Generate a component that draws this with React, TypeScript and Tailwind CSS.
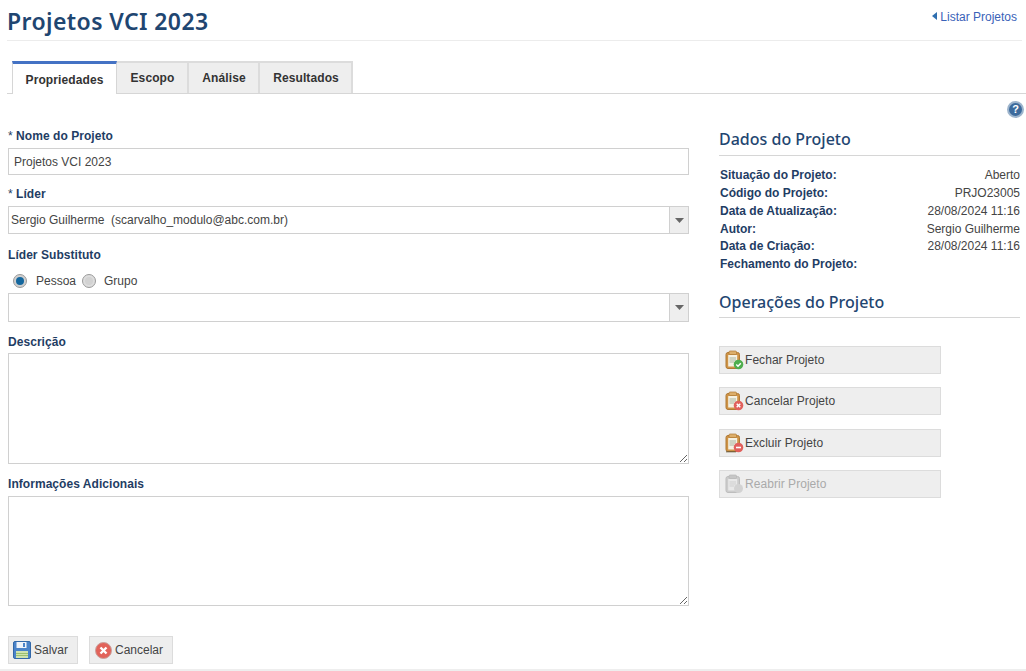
const label = "block text-[12px] leading-[14px] font-bold tracking-[0.05px] text-[#1f3d64]";
const field = "block w-full border border-[#d0d0d0] bg-white";
const heading = "border-b border-[#d6d6d6] font-['Noto_Sans',sans-serif] text-[16px] leading-[24px] font-medium text-[#1f4671]";

function Clipboard({ badge }: { badge?: "ok" | "x" | "minus" }) {
  const gray = !badge;
  return (
    <svg width="19" height="20" viewBox="0 0 19 20" className="shrink-0">
      <rect x="1" y="2.5" width="13.5" height="16" rx="2" fill={gray ? "#cccccc" : "#cf9447"} stroke={gray ? "#bdbdbd" : "#b07a35"} />
      <rect x="3.2" y="5" width="9" height="11.5" fill={gray ? "#e8e8e8" : "#f5f1e2"} />
      <path d="M4.5 8h6.5M4.5 10h6.5M4.5 12h4.5" stroke={gray ? "#cfcfcf" : "#a8b5a2"} strokeWidth="1" />
      <rect x="4" y="1" width="7.5" height="3.5" rx="1" fill={gray ? "#c6c6c6" : "#dcae6a"} stroke={gray ? "#b8b8b8" : "#b07a35"} strokeWidth="0.7" />
      {badge === "ok" && (
        <>
          <circle cx="13.5" cy="14.5" r="4.8" fill="#4fae4e" />
          <path d="M11.3 14.5l1.7 1.7 2.8-3" stroke="#fff" strokeWidth="1.4" fill="none" />
        </>
      )}
      {badge === "x" && (
        <>
          <circle cx="13.5" cy="14.5" r="4.8" fill="#e0605c" />
          <path d="M11.7 12.7l3.6 3.6M15.3 12.7l-3.6 3.6" stroke="#fff" strokeWidth="1.4" />
        </>
      )}
      {badge === "minus" && (
        <>
          <path d="M1 18.8h10" stroke="#6b5a3a" strokeWidth="1" />
          <circle cx="13.5" cy="14.5" r="4.8" fill="#e0605c" />
          <path d="M11 14.5h5" stroke="#fff" strokeWidth="1.6" />
        </>
      )}
      {gray && <circle cx="13.5" cy="14.5" r="4.5" fill="#d2d2d2" />}
    </svg>
  );
}

function Select({ value, className }: { value?: string; className: string }) {
  return (
    <div className={`flex border border-[#d0d0d0] bg-white ${className}`}>
      <div className="flex-1 pl-[2px] text-[12px] leading-[26px] whitespace-pre text-[#444]">{value}</div>
      <div className="flex w-[19px] items-center justify-center border-l border-[#d0d0d0] bg-[#eeeeee]">
        <svg width="9" height="5" viewBox="0 0 9 5"><path d="M0 0h9L4.5 5z" fill="#666" /></svg>
      </div>
    </div>
  );
}

function Radio({ on }: { on?: boolean }) {
  return (
    <span className={`flex h-[14px] w-[14px] items-center justify-center rounded-full border border-[#9a9a9a] ${on ? "bg-[#cfcfcf]" : "bg-[#dddddd]"}`}>
      <span className={`h-[8px] w-[8px] rounded-full ${on ? "bg-[#14679e]" : "bg-[#d2d2d2]"}`} />
    </span>
  );
}

const dados = [
  ["Situação do Projeto:", "Aberto"],
  ["Código do Projeto:", "PRJO23005"],
  ["Data de Atualização:", "28/08/2024 11:16"],
  ["Autor:", "Sergio Guilherme"],
  ["Data de Criação:", "28/08/2024 11:16"],
  ["Fechamento do Projeto:", ""],
];

const ops: { text: string; badge?: "ok" | "x" | "minus" }[] = [
  { text: "Fechar Projeto", badge: "ok" },
  { text: "Cancelar Projeto", badge: "x" },
  { text: "Excluir Projeto", badge: "minus" },
  { text: "Reabrir Projeto" },
];

const tabs = [
  { text: "Escopo", w: "w-[72px]" },
  { text: "Análise", w: "w-[71px]" },
  { text: "Resultados", w: "w-[93px]" },
];

export default function App() {
  return (
    <div className="h-[671px] w-[1026px] overflow-hidden bg-white font-['Liberation_Sans',Arial,sans-serif] text-[12px] text-[#444]">
      <div className="ml-[7px] mr-[4px] flex h-[41px] justify-between border-b border-[#ececec]">
        <h1 className="font-['Noto_Sans',sans-serif] text-[23px] leading-[43px] font-semibold tracking-[0.4px] text-[#1f4671]">Projetos VCI 2023</h1>
        <a className="mt-[9px] mr-[5px] flex h-[16px] items-center text-[12px] text-[#3a62b8]">
          <svg width="5" height="8" viewBox="0 0 5 8" className="mr-[3px] mb-[2px]"><path d="M5 0v8L0 4z" fill="#2f6fb0" /></svg>
          Listar Projetos
        </a>
      </div>

      <div className="mt-[20px] ml-[7px] flex h-[33px] border-b border-[#d6d6d6] pl-[5px]">
        <div className="z-10 h-[33px] w-[105px] border-x border-[#d6d6d6] border-t-[3px] border-t-[#4472c4] bg-white pt-[8px] text-center text-[12px] leading-[16px] font-bold tracking-[0.1px] text-[#333]">Propriedades</div>
        {tabs.map((t) => (
          <div key={t.text} className={`${t.w} h-[32px] border-y-2 border-r-2 border-[#dcdcdc] border-b-0 bg-[#eeeeee] pt-[7px] pl-[1px] text-center text-[12px] leading-[16px] font-bold tracking-[0.1px] text-[#333]`}>{t.text}</div>
        ))}
      </div>

      <div className="flex justify-end pt-[7px] pr-[2px]">
        <span className="flex h-[17px] w-[17px] items-center justify-center rounded-full border-2 border-[#9db4cc] bg-[#3c6a9c] text-[11px] leading-none font-bold text-white">?</span>
      </div>

      <div className="flex">
        <div className="ml-[8px] w-[681px]">
          <label className={`${label} mt-[11px]`}><span className="font-normal">* </span>Nome do Projeto</label>
          <div className={`${field} mt-[5px] h-[27px] pl-[5px] text-[12px] leading-[26px]`}>Projetos VCI 2023</div>

          <label className={`${label} mt-[12px]`}><span className="font-normal">* </span>Líder</label>
          <Select value="Sergio Guilherme  (scarvalho_modulo@abc.com.br)" className="mt-[5px] h-[28px]" />

          <label className={`${label} mt-[14px]`}>Líder Substituto</label>
          <div className="mt-[11px] flex h-[16px] items-center pl-[5px]">
            <Radio on />
            <span className="ml-[9px]">Pessoa</span>
            <span className="ml-[6px]"><Radio /></span>
            <span className="ml-[8px]">Grupo</span>
          </div>
          <Select className="mt-[4px] h-[29px]" />

          <label className={`${label} mt-[13px]`}>Descrição</label>
          <textarea className={`${field} mt-[4px] h-[111px]`} />

          <label className={`${label} mt-[13px]`}>Informações Adicionais</label>
          <textarea className={`${field} mt-[5px] h-[110px]`} />

          <div className="mt-[30px] flex gap-[11px]">
            <button className="flex h-[28px] w-[70px] items-center border border-[#dcdcdc] bg-[#eeeeee] pl-[4px] text-[12px]">
              <svg width="18" height="18" viewBox="0 0 18 18" className="mr-[3px]">
                <rect x="0.5" y="0.5" width="17" height="17" rx="1.5" fill="#4a83c9" stroke="#3268a8" />
                <rect x="3.5" y="1" width="10" height="6" fill="#eef3fa" />
                <rect x="10" y="2" width="2" height="4" fill="#4a83c9" />
                <rect x="3" y="10" width="12" height="7" fill="#cfe3b0" />
                <path d="M3 12.5h12M3 14.5h12" stroke="#9cc06f" />
              </svg>
              Salvar
            </button>
            <button className="flex h-[28px] w-[84px] items-center border border-[#dcdcdc] bg-[#eeeeee] pl-[5px] text-[12px]">
              <svg width="17" height="17" viewBox="0 0 17 17" className="mr-[3px]">
                <circle cx="8.5" cy="8.5" r="8" fill="#e2635a" stroke="#c9a09c" />
                <path d="M5.5 5.5l6 6M11.5 5.5l-6 6" stroke="#fff" strokeWidth="2.4" />
              </svg>
              Cancelar
            </button>
          </div>
        </div>

        <div className="ml-[30px] w-[301px]">
          <h2 className={`mt-[9px] pb-[4px] ${heading}`}>Dados do Projeto</h2>
          <div className="mt-[10.6px]">
            {dados.map(([k, v]) => (
              <div key={k} className="flex h-[17.7px] items-center justify-between pl-[1px] text-[12px]">
                <span className="font-bold text-[#1f3d64]">{k}</span>
                <span>{v}</span>
              </div>
            ))}
          </div>
          <h2 className={`mt-[17.4px] pb-[3px] ${heading}`}>Operações do Projeto</h2>
          <div className="mt-[28px] flex flex-col gap-[13.3px]">
            {ops.map((o) => (
              <button key={o.text} className={`flex h-[28px] w-[222px] items-center border border-[#dcdcdc] bg-[#eeeeee] pl-[5px] text-[12px] tracking-[0.05px] ${o.badge ? "" : "text-[#aaaaaa]"}`}>
                <span className="mr-[1px]"><Clipboard badge={o.badge} /></span>
                {o.text}
              </button>
            ))}
          </div>
        </div>
      </div>
      <div className="mt-[5px] h-[2px] bg-[#eeeeee]" />
    </div>
  );
}
